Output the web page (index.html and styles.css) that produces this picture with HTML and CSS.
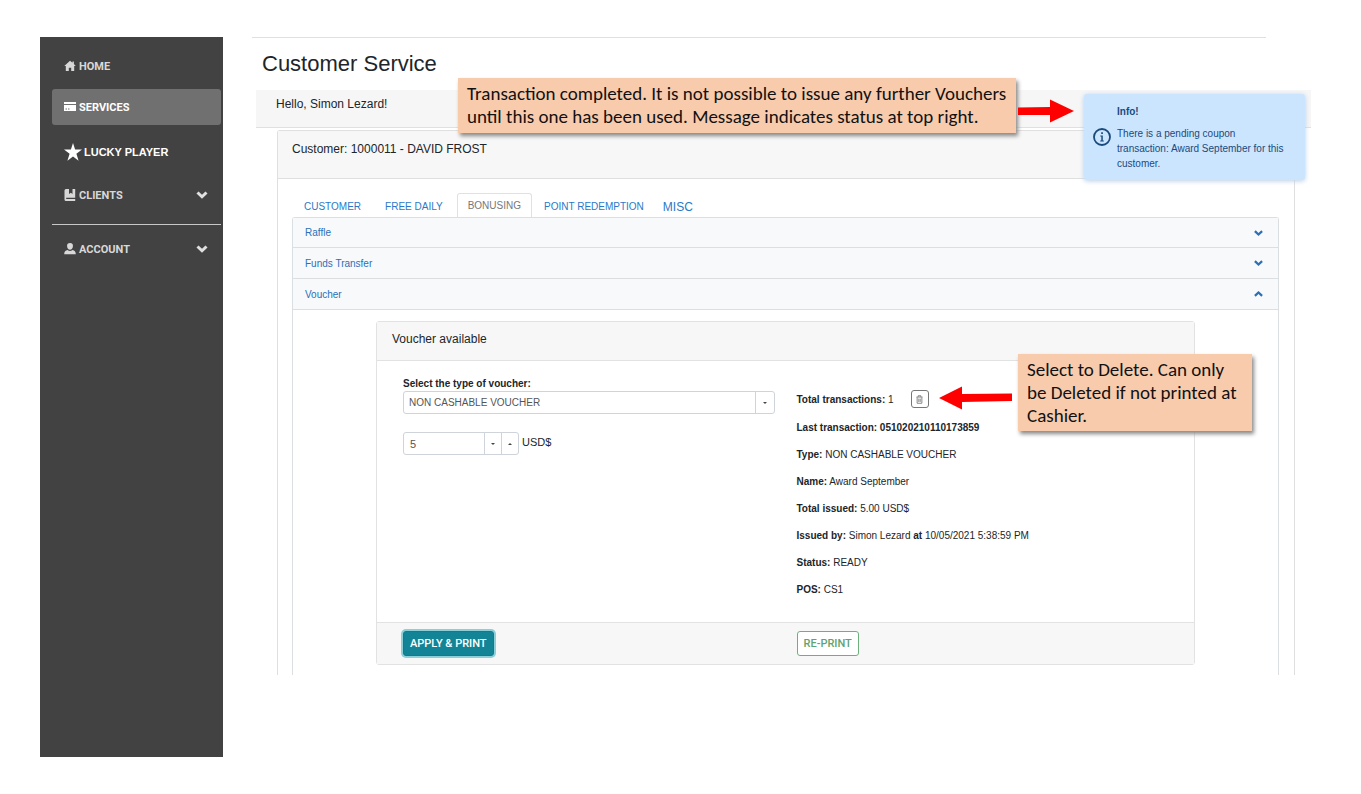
FILE: index.html
```html
<!DOCTYPE html>
<html lang="en">
<head>
  <meta charset="UTF-8">
  <meta name="viewport" content="width=device-width, initial-scale=1">
  <title>Customer Service</title>
  <link rel="stylesheet" href="styles.css">
</head>
<body>
  <div class="page">

    <!-- Sidebar -->
    <nav class="sidebar">
      <a class="nav-item" href="#">
        <svg class="icon" viewBox="0 0 12 12"><path d="M6 .8 .3 6.1h1.500V11h3V7.700h2.400V11h3V6.100h1.500L9.900 4V1.600H8.500v1.100z"/></svg>
        HOME
      </a>
      <a class="nav-item active" href="#">
        <svg class="icon" viewBox="0 0 12 12"><path d="M0 1h12v2H0zM0 4h12v6H0zm1.500 3.500v1H3v-1zm2.500 0v1h1.500v-1z" fill-rule="evenodd"/></svg>
        SERVICES
      </a>
      <a class="nav-item lucky" href="#">
        <svg class="icon star" viewBox="0 0 18 18"><path d="M9 0l2.100 6.600H18l-5.600 4.200 2.200 6.900L9 13.500l-5.600 4.200 2.200-6.900L0 6.600h6.900z"/></svg>
        LUCKY PLAYER
      </a>
      <a class="nav-item" href="#">
        <svg class="icon" viewBox="0 0 12 12"><path d="M.5 1.500Q.5 0 2 0H5v5l1.800-1.300L8.500 5V0h2.700v8.700H2.200v1.200h9V12H2Q.5 12 .5 10.500z"/></svg>
        CLIENTS
        <svg class="arrow" viewBox="0 0 12 8"><path d="M1.500 1.500 6 5.800l4.500-4.300"/></svg>
      </a>
      <hr class="divider">
      <a class="nav-item" href="#">
        <svg class="icon" viewBox="0 0 12 12"><path d="M6 0a2.900 2.900 0 0 1 2.900 3.200C8.800 5.200 7.600 6.700 6 6.700S3.200 5.200 3.100 3.200A2.900 2.900 0 0 1 6 0zM.2 11.300C.2 8.500 1.500 7.500 3.500 7.100Q6 8.800 8.500 7.100c2 .4 3.300 1.400 3.300 4.200z"/></svg>
        ACCOUNT
        <svg class="arrow" viewBox="0 0 12 8"><path d="M1.500 1.500 6 5.800l4.500-4.300"/></svg>
      </a>
    </nav>

    <!-- Content -->
    <main class="content">
      <h1>Customer Service</h1>
      <div class="greeting">Hello, Simon Lezard!</div>

      <section class="customer-card">
        <div class="customer-header">Customer: 1000011 - DAVID FROST</div>
        <div class="customer-body">
          <div class="tabs">
            <a href="#">CUSTOMER</a>
            <a href="#">FREE DAILY</a>
            <a class="active" href="#">BONUSING</a>
            <a href="#">POINT REDEMPTION</a>
            <a class="misc" href="#">MISC</a>
          </div>

          <div class="accordion">
            <button class="accordion-head" type="button">Raffle
              <svg class="chevron" viewBox="0 0 8 5"><path d="M.8.8 4 3.800 7.200.8"/></svg>
            </button>
            <button class="accordion-head" type="button">Funds Transfer
              <svg class="chevron" viewBox="0 0 8 5"><path d="M.8.8 4 3.800 7.200.8"/></svg>
            </button>
            <button class="accordion-head" type="button" aria-expanded="true">Voucher
              <svg class="chevron" viewBox="0 0 8 5"><path d="M.8 4.200 4 1.200 7.200 4.200"/></svg>
            </button>

            <div class="accordion-body">
              <form class="voucher">
                <div class="voucher-header">Voucher available</div>
                <div class="voucher-body">
                  <div class="voucher-form">
                    <label for="voucherType">Select the type of voucher:</label>
                    <div class="select-box">
                      <select id="voucherType">
                        <option>NON CASHABLE VOUCHER</option>
                      </select>
                      <span class="caret-cell"><span class="caret down"></span></span>
                    </div>
                    <div class="amount-row">
                      <div class="amount">
                        <input type="text" id="amount" value="5">
                        <button type="button" aria-label="Decrease"><span class="caret down"></span></button>
                        <button type="button" aria-label="Increase"><span class="caret up"></span></button>
                      </div>
                      <label class="unit" for="amount">USD$</label>
                    </div>
                  </div>

                  <div class="voucher-info">
                    <p class="total"><span><b>Total transactions:</b> 1</span>
                      <button class="delete-btn" type="button" aria-label="Delete">
                        <svg viewBox="0 0 8 10"><path d="M.5 2.200h7M2.500 2V.700h3V2M1.300 2.500V9.300h5.400V2.500M3.200 4v3.800M4.800 4v3.800"/></svg>
                      </button>
                    </p>
                    <p><b>Last transaction: 051020210110173859</b></p>
                    <p><b>Type:</b> NON CASHABLE VOUCHER</p>
                    <p><b>Name:</b> Award September</p>
                    <p><b>Total issued:</b> 5.00 USD$</p>
                    <p><b>Issued by:</b> Simon Lezard <b>at</b> 10/05/2021 5:38:59 PM</p>
                    <p><b>Status:</b> READY</p>
                    <p><b>POS:</b> CS1</p>
                  </div>
                </div>
                <div class="voucher-footer">
                  <div><button class="btn btn-apply" type="button">APPLY &amp; PRINT</button></div>
                  <div><button class="btn btn-reprint" type="button">RE-PRINT</button></div>
                </div>
              </form>
            </div>
          </div>
        </div>
      </section>

      <!-- Notification -->
      <div class="toast" role="status">
        <svg class="toast-icon" viewBox="0 0 18 18"><circle cx="9" cy="9" r="8" fill="none" stroke="currentColor" stroke-width="1.800"/><path d="M8.200 4.200h1.700v1.700H8.200zM7.300 7.400h2.500v5h1v1H7.200v-1h1.100v-4h-1z" fill="currentColor"/></svg>
        <div>
          <strong>Info!</strong>
          <p>There is a pending coupon transaction: Award September for this customer.</p>
        </div>
      </div>

      <!-- Guide notes -->
      <div class="note note-status">
        Transaction completed. It is not possible to issue any further Vouchers<br>
        until this one has been used. Message indicates status at top right.
      </div>
      <svg class="pointer pointer-status" viewBox="0 0 56 24"><path d="M0 8.500 32 8V.5L56 12 32 23.500V16L0 16z"/></svg>

      <div class="note note-delete">
        Select to Delete. Can only<br>
        be Deleted if not printed at<br>
        Cashier.
      </div>
      <svg class="pointer pointer-delete" viewBox="0 0 73 24"><path d="M73 7.500 23 8V.5L0 12 23 23.500V16L73 15z"/></svg>
    </main>
  </div>
</body>
</html>
```

FILE: styles.css
```css
* {
  box-sizing: border-box;
}
body {
  margin: 0;
  background: #fff;
  color: #212529;
  font-family: "Liberation Sans", Arial, sans-serif;
  font-size: 11px;
}
p {
  margin: 0;
}
a {
  color: #2a79c8;
  text-decoration: none;
}
button, input, select {
  font-family: inherit;
  font-size: inherit;
}
.page {
  display: flex;
  gap: 29px;
  padding: 37px 50px 37px 40px;
}

/* Sidebar */
.sidebar {
  flex: 0 0 183px;
  min-height: calc(100vh - 74px);
  padding: 11px 2px 0 12px;
  background: #424242;
}
.nav-item {
  display: flex;
  align-items: center;
  gap: 3px;
  height: 36px;
  margin-bottom: 5px;
  padding: 0 13px 0 12px;
  border-radius: 3px;
  color: #d8d8d8;
  font-family: Roboto, sans-serif;
  font-size: 11px;
  font-weight: bold;
}
.nav-item.active {
  margin-bottom: 9px;
  background: #707070;
  color: #fff;
}
.nav-item.lucky {
  margin-bottom: 7px;
  gap: 2px;
  color: #fff;
  font-family: "Liberation Sans", Arial, sans-serif;
}
.icon {
  width: 12px;
  height: 12px;
  fill: currentColor;
}
.star {
  width: 18px;
  height: 18px;
}
.arrow {
  width: 12px;
  height: 8px;
  margin-left: auto;
  fill: none;
  stroke: #e0e0e0;
  stroke-width: 3;
}
.divider {
  margin: 11px 0 6px;
  border: 0;
  border-top: 1px solid #c8c8c8;
}

/* Content */
.content {
  position: relative;
  flex: 1;
}
.content::before {
  content: "";
  display: block;
  margin-right: 45px;
  border-top: 1px solid #e0e0e0;
}
h1 {
  margin: 0 0 0 10px;
  padding: 12px 0 13px;
  font-size: 22px;
  line-height: 27px;
  font-weight: normal;
}
.greeting {
  height: 38px;
  margin-left: 4px;
  padding: 6px 20px;
  border-bottom: 1px solid #e0e0e0;
  background: #f6f6f6;
  font-size: 12px;
  line-height: 16px;
}
.customer-card {
  margin: 2px 16px 0 25px;
  border: 1px solid #dfdfdf;
  border-bottom: 0;
  border-radius: 3px 3px 0 0;
}
.customer-header {
  height: 48px;
  padding: 10px 14px;
  border-bottom: 1px solid #dfdfdf;
  background: #f7f7f7;
  font-size: 12px;
  line-height: 16px;
}
.customer-body {
  padding: 14px 15px 0 14px;
}

/* Tabs */
.tabs {
  display: flex;
  height: 24px;
  font-size: 10px;
}
.tabs a {
  padding: 0 11px;
  border: 1px solid transparent;
  border-bottom: 0;
  line-height: 26px;
}
.tabs .active {
  margin-left: 2px;
  padding: 0 10px;
  border-color: #dee2e6;
  border-radius: 3px 3px 0 0;
  background: #fff;
  color: #777;
  line-height: 24px;
}
.tabs .misc {
  padding: 0 6px;
  font-size: 12px;
}

/* Accordion */
.accordion {
  border: 1px solid #dcdfe2;
  border-bottom: 0;
  border-radius: 3px 3px 0 0;
}
.accordion-head {
  display: flex;
  align-items: center;
  justify-content: space-between;
  width: 100%;
  height: 30px;
  padding: 0 15px 0 12px;
  border: 0;
  border-bottom: 1px solid #dcdfe2;
  background: #f8f9fb;
  color: #2a70b8;
  font-size: 10px;
}
.accordion-head + .accordion-head {
  height: 31px;
}
.chevron {
  width: 9px;
  height: 6px;
  fill: none;
  stroke: #2a70b8;
  stroke-width: 2;
}
.accordion-body {
  padding: 11px 83px 10px;
}

/* Voucher */
.voucher {
  border: 1px solid #e2e2e2;
  border-radius: 3px;
}
.voucher-header {
  height: 39px;
  padding: 9px 15px;
  border-bottom: 1px solid #e2e2e2;
  background: #f7f7f7;
  font-size: 12px;
  line-height: 16px;
}
.voucher-body, .voucher-footer {
  display: grid;
  grid-template-columns: 1fr 1fr;
  column-gap: 22px;
  padding: 0 26px;
}
.voucher-body {
  padding-top: 15px;
  padding-bottom: 25px;
}
.voucher-form label {
  display: block;
  line-height: 15px;
}
.voucher-form > label {
  font-weight: bold;
  font-size: 10px;
}
.select-box, .amount {
  display: flex;
  border: 1px solid #ced4da;
  border-radius: 3px;
}
.select-box {
  position: relative;
}
.select-box select {
  width: 100%;
  height: 21px;
  padding: 0 5px;
  border: 0;
  background: transparent;
  color: #555;
  font-size: 10px;
  appearance: none;
}
.caret-cell {
  position: absolute;
  top: 0;
  right: 0;
  display: flex;
  align-items: center;
  justify-content: center;
  width: 19px;
  height: 100%;
  border-left: 1px solid #ced4da;
  pointer-events: none;
}
.amount-row {
  display: flex;
  gap: 3px;
  margin-top: 18px;
}
.amount input {
  width: 80px;
  height: 21px;
  padding: 0 6px;
  border: 0;
  background: transparent;
  color: #555;
}
.amount button {
  display: flex;
  align-items: center;
  justify-content: center;
  width: 17px;
  padding: 0;
  border: 0;
  border-left: 1px solid #ced4da;
  background: none;
}
.caret {
  border: 2px solid transparent;
}
.caret.down {
  border-top-color: #444;
  border-bottom: 0;
}
.caret.up {
  border-bottom-color: #444;
  border-top: 0;
}
.voucher-form .unit {
  line-height: 20px;
}
.voucher-info {
  display: flex;
  flex-direction: column;
  gap: 12px;
  padding-top: 14px;
  font-size: 10px;
  line-height: 15px;
}
.voucher-info .total {
  display: flex;
  align-items: center;
  gap: 17px;
  height: 18px;
}
.delete-btn {
  display: flex;
  align-items: center;
  justify-content: center;
  width: 18px;
  height: 18px;
  padding: 0;
  border: 1px solid #777;
  border-radius: 3px;
  background: #fff;
}
.delete-btn svg {
  width: 7px;
  height: 9px;
  fill: none;
  stroke: #777;
  stroke-width: 1;
}
.voucher-footer {
  padding-top: 8px;
  padding-bottom: 8px;
  border-top: 1px solid #e2e2e2;
  background: #f7f7f7;
}
.btn {
  height: 25px;
  padding: 0 6px;
  border-radius: 3px;
  font-family: Roboto, sans-serif;
  font-size: 11px;
  font-weight: 500;
}
.btn-apply {
  border: 1px solid #117a8b;
  background: #138496;
  color: #fff;
  box-shadow: 0 0 0 2px #8bcfd8;
}
.btn-reprint {
  border: 1px solid #6db07c;
  background: #fff;
  color: #5fa36f;
}

/* Notification */
.toast {
  position: absolute;
  top: 57px;
  right: 6px;
  display: flex;
  align-items: center;
  gap: 6px;
  width: 221px;
  height: 86px;
  padding: 0 17px 0 9px;
  border-radius: 3px;
  background: #cce5ff;
  color: #1a4a7c;
  font-size: 10px;
  line-height: 15px;
  box-shadow: 0 1px 5px #b8cde4;
}
.toast-icon {
  flex: 0 0 18px;
  height: 18px;
}
.toast strong {
  display: block;
  margin-bottom: 7px;
}

/* Guide notes */
.note {
  position: absolute;
  padding: 4px 9px;
  background: #f8cbad;
  color: #111;
  font-family: Carlito, Calibri, Lato, sans-serif;
  font-size: 19px;
  line-height: 23px;
  white-space: nowrap;
  box-shadow: 2px 3px 4px #888;
}
.note-status {
  top: 41px;
  left: 206px;
  width: 558px;
  height: 55px;
}
.note-delete {
  top: 317px;
  right: 59px;
  width: 234px;
}
.pointer {
  position: absolute;
  height: 24px;
  fill: #f00;
}
.pointer-status {
  top: 62px;
  left: 766px;
  width: 56px;
}
.pointer-delete {
  top: 349px;
  right: 299px;
  width: 73px;
}
```
